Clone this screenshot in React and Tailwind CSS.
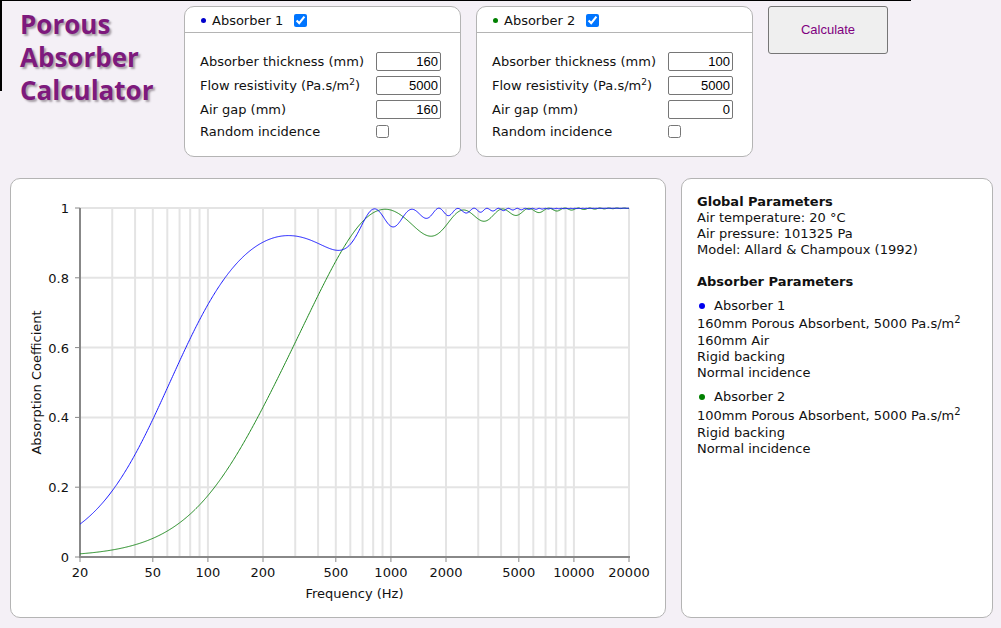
import React from "react";

const cx = (re, im = 0) => ({ re, im });
const add = (a, b) => cx(a.re + b.re, a.im + b.im);
const sub = (a, b) => cx(a.re - b.re, a.im - b.im);
const mul = (a, b) => cx(a.re * b.re - a.im * b.im, a.re * b.im + a.im * b.re);
const div = (a, b) => {
  const d = b.re * b.re + b.im * b.im;
  return cx((a.re * b.re + a.im * b.im) / d, (a.im * b.re - a.re * b.im) / d);
};
const csqrt = (a) => {
  const r = Math.hypot(a.re, a.im);
  const s = Math.sqrt(Math.max(0, (r + a.re) / 2));
  let t = Math.sqrt(Math.max(0, (r - a.re) / 2));
  if (a.im < 0) t = -t;
  return cx(s, t);
};
const ctan = (a) => {
  const d = Math.cos(2 * a.re) + Math.cosh(2 * a.im);
  return cx(Math.sin(2 * a.re) / d, Math.sinh(2 * a.im) / d);
};

const RHO0 = 1.204;
const C0 = 343.2;
const Z0 = RHO0 * C0;

function alpha(f, d, D, sigma) {
  const X = f / sigma;
  const rho = add(cx(1.2), csqrt(cx(-0.0364 / (X * X), -0.1144 / X)));
  const Q = csqrt(cx(2.82 / (X * X), 24.9 / X));
  const K = mul(cx(101320), div(add(Q, cx(0, 29.64)), add(Q, cx(0, 21.17))));
  const Zc = csqrt(mul(rho, K));
  const w = 2 * Math.PI * f;
  const k = mul(cx(w), csqrt(div(rho, K)));
  const T = ctan(mul(k, cx(d)));
  let Zs;
  if (D <= 0) {
    Zs = div(mul(cx(0, -1), Zc), T);
  } else {
    const k0 = w / C0;
    const Za = cx(0, -Z0 / Math.tan(k0 * D));
    Zs = mul(Zc, div(add(Za, mul(cx(0, 1), mul(Zc, T))), add(Zc, mul(cx(0, 1), mul(Za, T)))));
  }
  const R = div(sub(Zs, cx(Z0)), add(Zs, cx(Z0)));
  return 1 - (R.re * R.re + R.im * R.im);
}

const PX0 = 69;
const PX1 = 618;
const PYT = 29;
const PYB = 378;
const xOf = (f) => PX0 + (Math.log10(f / 20) / 3) * (PX1 - PX0);
const yOf = (a) => PYB - a * (PYB - PYT);

function curve(d, D, sigma) {
  const N = 700;
  let p = "";
  for (let i = 0; i <= N; i++) {
    const f = 20 * Math.pow(1000, i / N);
    let a = alpha(f, d, D, sigma);
    if (!isFinite(a)) a = 0;
    a = Math.max(0, Math.min(1, a));
    p += (i === 0 ? "M" : "L") + xOf(f).toFixed(2) + "," + yOf(a).toFixed(2);
  }
  return p;
}

function Chart() {
  const grid = [];
  for (const dec of [10, 100, 1000, 10000]) {
    for (let m = 1; m <= 9; m++) {
      const f = m * dec;
      if (f > 20 && f <= 20000) grid.push(f);
    }
  }
  const labels = [20, 50, 100, 200, 500, 1000, 2000, 5000, 10000, 20000];
  const yl = [0, 0.2, 0.4, 0.6, 0.8, 1];
  const blue = curve(0.16, 0.16, 5000);
  const green = curve(0.1, 0, 5000);
  return (
    <svg width="654" height="438" viewBox="0 0 654 438" className="block" fontFamily="'DejaVu Sans', Verdana, sans-serif" fontSize="13">
      {grid.map((f) => (
        <line key={f} x1={xOf(f)} x2={xOf(f)} y1={PYT} y2={PYB} stroke="#e4e4e4" strokeWidth="2" />
      ))}
      {yl.slice(1).map((a) => (
        <line key={a} x1={PX0} x2={PX1} y1={yOf(a)} y2={yOf(a)} stroke="#e4e4e4" strokeWidth="2" />
      ))}
      <line x1={PX0} x2={PX0} y1={PYT} y2={PYB + 1} stroke="#888888" strokeWidth="2" />
      <line x1={PX0 - 1} x2={PX1 + 1} y1={PYB} y2={PYB} stroke="#888888" strokeWidth="2" />
      {yl.map((a) => (
        <g key={a}>
          <line x1={PX0 - 5} x2={PX0} y1={yOf(a)} y2={yOf(a)} stroke="#888888" strokeWidth="1" />
          <text x={PX0 - 11} y={yOf(a) + 5} textAnchor="end" fill="#111">
            {a === 0 ? "0" : a === 1 ? "1" : String(a)}
          </text>
        </g>
      ))}
      {labels.map((f) => (
        <g key={f}>
          <line x1={xOf(f)} x2={xOf(f)} y1={PYB} y2={PYB + 5} stroke="#888888" strokeWidth="1" />
          <text x={xOf(f)} y={PYB + 20} textAnchor="middle" fill="#111">
            {f}
          </text>
        </g>
      ))}
      <text x={(PX0 + PX1) / 2} y={419} textAnchor="middle" fill="#111">
        Frequency (Hz)
      </text>
      <text
        x={0}
        y={0}
        textAnchor="middle"
        fill="#111"
        transform={`translate(30 ${(PYT + PYB) / 2}) rotate(-90)`}
      >
        Absorption Coefficient
      </text>
      <path d={green} fill="none" stroke="#1f8a1f" strokeWidth="1" />
      <path d={blue} fill="none" stroke="#1a1aff" strokeWidth="1" />
    </svg>
  );
}

function Row({ label, value }) {
  return (
    <div className="flex items-center h-[19px]">
      <div className="w-[176px]">{label}</div>
      <input
        type="text"
        defaultValue={value}
        className="w-[65px] h-[19px] border border-[#767676] rounded-[2px] bg-white text-right pr-[2px] font-['Liberation_Sans',Arial,sans-serif] text-[13px] text-black outline-none"
      />
    </div>
  );
}

function AbsorberCard({ name, dot, t, s, g }) {
  return (
    <div className="w-[277px] h-[151px] border border-[#b4b4b4] rounded-[10px] bg-white shrink-0">
      <div className="h-[26px] border-b border-[#b4b4b4] flex items-center pl-[16px] pt-[2px]">
        <span className={`w-[5px] h-[5px] rounded-full ${dot}`}></span>
        <span className="ml-[6px]">{name}</span>
        <input type="checkbox" defaultChecked className="ml-[11px] m-0 w-[13px] h-[13px]" />
      </div>
      <div className="pl-[15px] pt-[19px] flex flex-col gap-[5px]">
        <Row label="Absorber thickness (mm)" value={t} />
        <Row
          label={
            <span>
              Flow resistivity (Pa.s/m<sup className="text-[9px]">2</sup>)
            </span>
          }
          value={s}
        />
        <Row label="Air gap (mm)" value={g} />
        <div className="flex items-center h-[19px] -mt-[2px]">
          <div className="w-[176px]">Random incidence</div>
          <input type="checkbox" className="m-0 w-[13px] h-[13px]" />
        </div>
      </div>
    </div>
  );
}

export default function App() {
  return (
    <div className="relative w-[1001px] h-[628px] overflow-hidden bg-[#f4f0f6] font-['DejaVu_Sans',Verdana,sans-serif] text-[13px] text-[#111]">
      <div className="px-[10px] pt-[6px]">
        <div className="flex gap-[15px] items-start">
          <div className="w-[159px] pl-[10px] pt-[2px] shrink-0 font-['Open_Sans',sans-serif] font-bold text-[26px] leading-[33px] text-[#7d1a7d] [text-shadow:2px_2px_2px_#a8a0a8]">
            <div>Porous</div>
            <div>Absorber</div>
            <div>Calculator</div>
          </div>
          <AbsorberCard name="Absorber 1" dot="bg-[#0000cc]" t="160" s="5000" g="160" />
          <AbsorberCard name="Absorber 2" dot="bg-[#008000]" t="100" s="5000" g="0" />
          <button className="w-[120px] h-[48px] shrink-0 bg-[#efefef] border border-[#767676] rounded-[3px] text-[#800080] font-['Liberation_Sans',Arial,sans-serif] text-[13px]">
            Calculate
          </button>
        </div>
        <div className="flex gap-[15px] mt-[21px]">
          <div className="w-[656px] h-[440px] border border-[#b4b4b4] rounded-[10px] bg-white shrink-0">
            <Chart />
          </div>
          <div className="w-[312px] h-[440px] border border-[#b4b4b4] rounded-[10px] bg-white shrink-0 pl-[15px] pt-[15px] text-[13px] leading-[16px]">
            <div className="font-bold">Global Parameters</div>
            <div>Air temperature: 20 °C</div>
            <div>Air pressure: 101325 Pa</div>
            <div>Model: Allard &amp; Champoux (1992)</div>
            <div className="font-bold mt-[16px]">Absorber Parameters</div>
            <div className="mt-[8px] flex items-center">
              <span className="w-[6px] h-[6px] rounded-full bg-[#0000ee] ml-[2px]"></span>
              <span className="ml-[9px]">Absorber 1</span>
            </div>
            <div className="leading-[19px]">
              160mm Porous Absorbent, 5000 Pa.s/m<sup className="text-[10px]">2</sup>
            </div>
            <div>160mm Air</div>
            <div>Rigid backing</div>
            <div>Normal incidence</div>
            <div className="mt-[8px] flex items-center">
              <span className="w-[6px] h-[6px] rounded-full bg-[#008000] ml-[2px]"></span>
              <span className="ml-[9px]">Absorber 2</span>
            </div>
            <div className="leading-[19px] mt-[1px]">
              100mm Porous Absorbent, 5000 Pa.s/m<sup className="text-[10px]">2</sup>
            </div>
            <div>Rigid backing</div>
            <div>Normal incidence</div>
          </div>
        </div>
      </div>
      <div className="absolute left-0 top-0 w-[911px] h-[91px] border-t border-l-2 border-black pointer-events-none"></div>
    </div>
  );
}
